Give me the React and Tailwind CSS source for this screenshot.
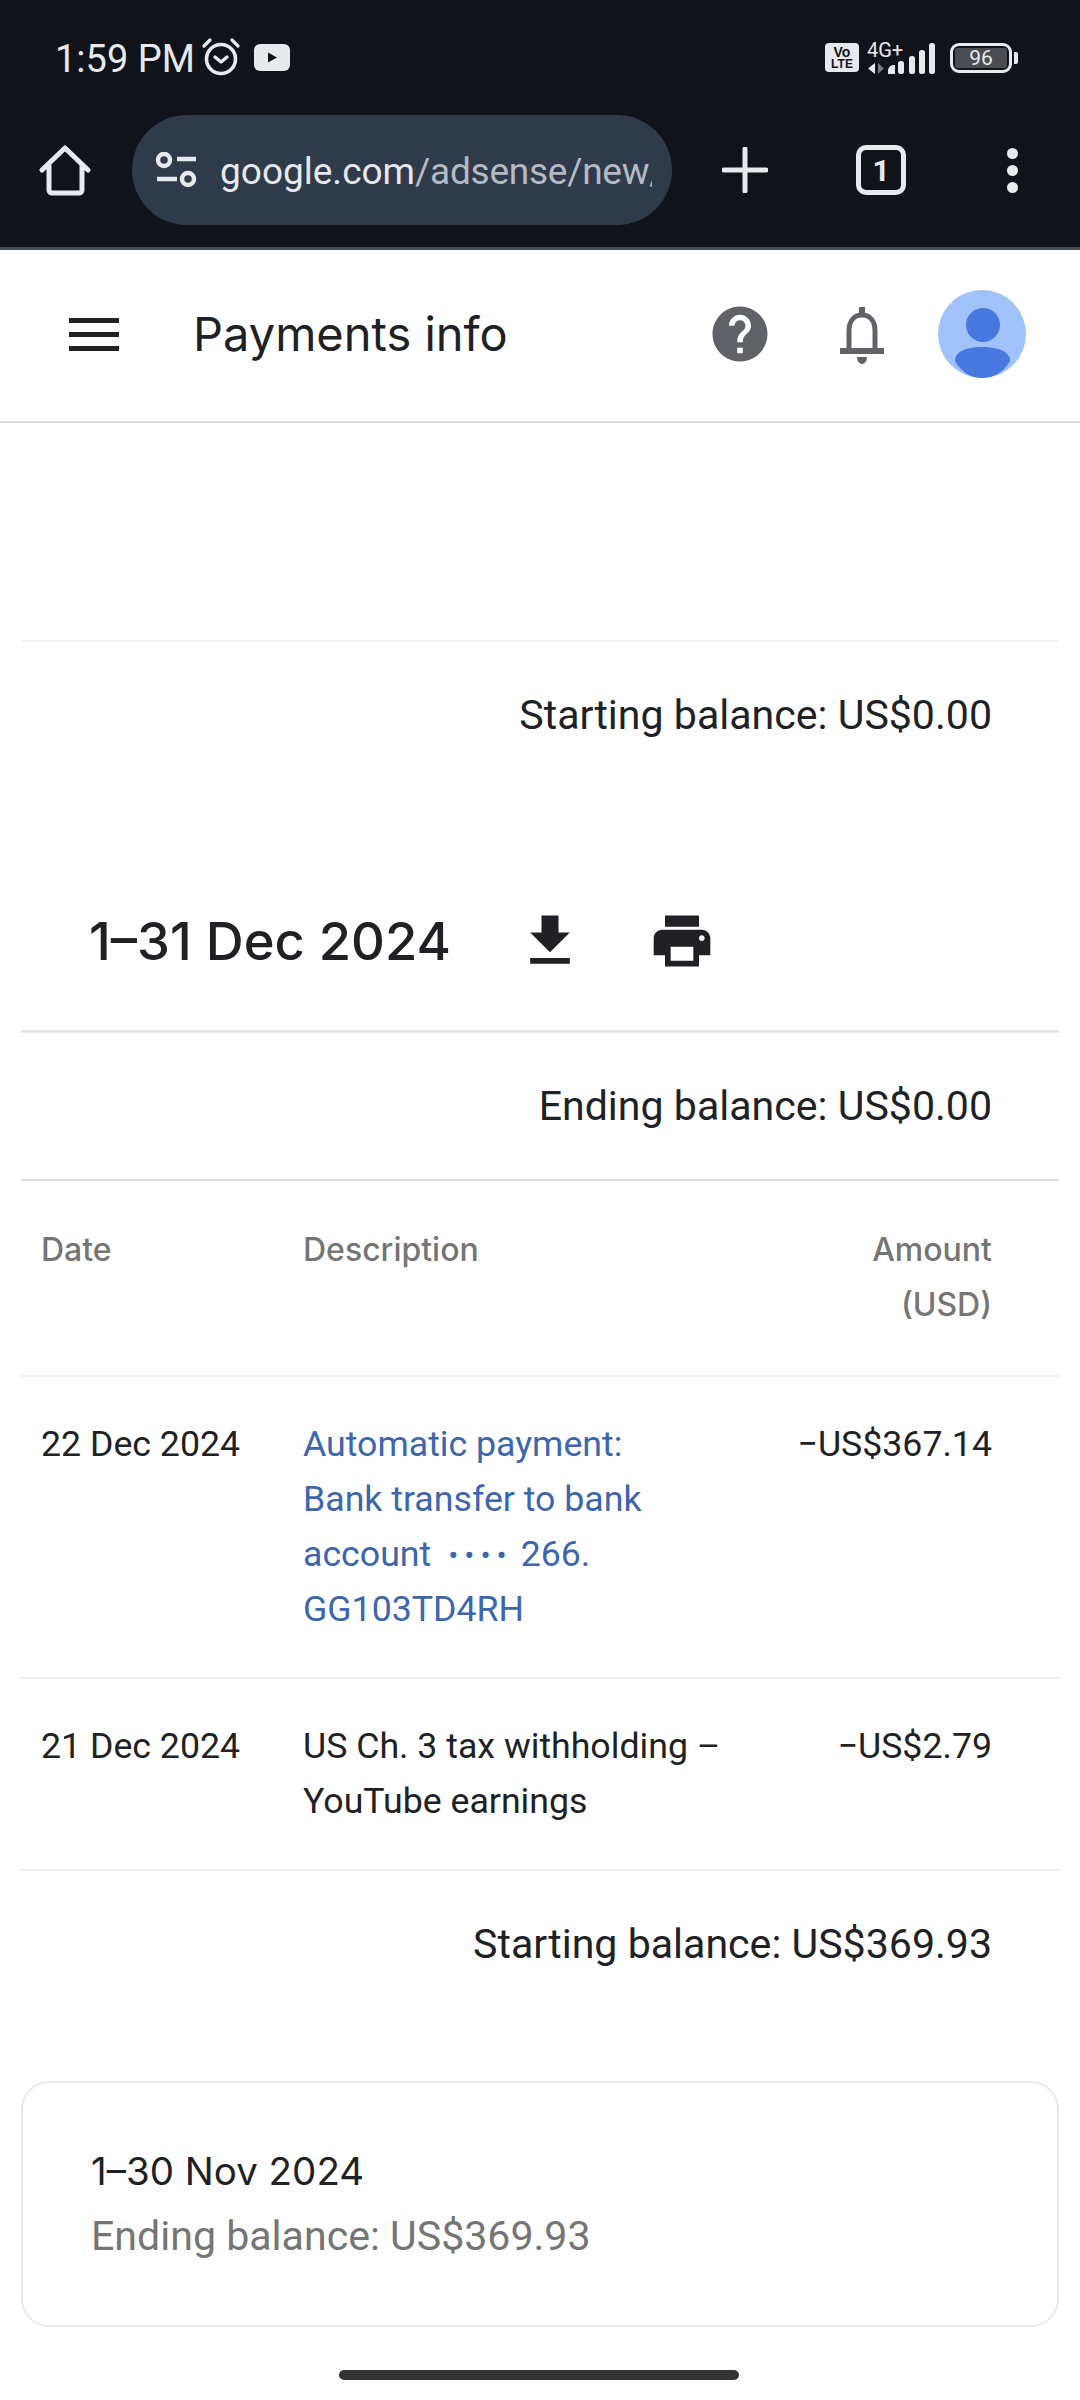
import React from "react";

const roboto = "font-['Roboto',sans-serif]";
const heading = "font-['Inter',sans-serif]";

const AlarmIcon = () => (
  <svg width="40" height="40" viewBox="0 0 40 40" fill="none" stroke="#e8e9ed" strokeLinecap="round">
    <circle cx="20" cy="22" r="14.5" strokeWidth="3.6" />
    <path d="M14 20l6 5 6-5" strokeWidth="3.4" strokeLinejoin="round" />
    <path d="M3 9l6-6M37 9l-6-6" strokeWidth="3.2" />
  </svg>
);

const YoutubeIcon = () => (
  <svg width="36" height="27" viewBox="0 0 36 27">
    <rect width="36" height="27" rx="6" fill="#e8e9ed" />
    <path d="M14 8.5l9 5-9 5z" fill="#10131a" />
  </svg>
);

const SignalIcon = () => (
  <svg width="70" height="32" viewBox="0 0 70 32">
    <path d="M9 20v11l-7-5.5z" fill="#e8e9ed" />
    <path d="M12 20v11l6-5.5z" fill="#77797d" />
    <path d="M22 31v-4a6 6 0 0 1 7-5v9z" fill="#e8e9ed" />
    <rect x="32" y="18" width="6" height="13" rx="2.5" fill="#e8e9ed" />
    <rect x="43" y="13" width="6" height="18" rx="2.5" fill="#e8e9ed" />
    <rect x="53" y="7" width="6" height="24" rx="2.5" fill="#e8e9ed" />
    <rect x="63" y="0" width="6" height="31" rx="2.5" fill="#e8e9ed" />
  </svg>
);

const StatusBar = () => (
  <div className="flex h-[115px] items-start justify-between pl-[55px] pr-[62px] pt-[38px]">
    <div className="flex items-center h-[38px]">
      <span className={`${roboto} text-[38px] leading-[38px] mt-[4px] text-[#e8e9ed] mr-[6px]`}>1:59 PM</span>
      <AlarmIcon />
      <span className="ml-[13px] flex">
        <YoutubeIcon />
      </span>
    </div>
    <div className="flex items-start h-[32px] mt-[5px]">
      <div className="flex h-[29px] w-[34px] flex-col items-center justify-center rounded-[4px] bg-[#e8e9ed] font-['Liberation_Sans',sans-serif] text-[14px] font-bold leading-[12px] text-[#10131a]">
        <span>Vo</span>
        <span className="text-[12px]">LTE</span>
      </div>
      <div className="relative ml-[7px] w-[70px] h-[31px]">
        <span className={`${roboto} absolute left-[1px] top-[-3px] text-[20px] leading-[20px] text-[#e8e9ed]`}>4G+</span>
        <span className="absolute left-0 top-0">
          <SignalIcon />
        </span>
      </div>
      <div className="ml-[14px] flex h-[30px] w-[62px] items-center justify-center rounded-[9px] border-[3px] border-[#e8e9ed] p-[2px]">
        <span className={`${roboto} flex h-full w-full items-center justify-center rounded-[2px] bg-[#4a4c52] text-[21px] leading-none text-[#e8e9ed]`}>96</span>
      </div>
      <div className="ml-[2px] mt-[9px] h-[12px] w-[4px] rounded-r-[2px] bg-[#e8e9ed]" />
    </div>
  </div>
);

const Toolbar = () => (
  <div className="flex h-[132px] items-start">
    <div className="flex h-[110px] w-[132px] shrink-0 items-center pl-[39px]">
      <svg className="mt-[2px]" width="52" height="52" viewBox="0 0 52 52" fill="none" stroke="#e8e9ed" strokeWidth="5" strokeLinejoin="round" strokeLinecap="round">
        <path d="M3 25L26 3l23 22M10 20v25a3 3 0 0 0 3 3h27a3 3 0 0 0 3-3V20" />
      </svg>
    </div>
    <div className="flex h-[110px] w-[540px] shrink-0 items-center rounded-full bg-[#2f3a4a] pl-[23px]">
      <svg width="42" height="36" viewBox="0 0 42 36" fill="none" stroke="#e8e9ed" strokeWidth="4.5">
        <circle cx="9" cy="8" r="6" />
        <path d="M22 7h19M2 27h20" />
        <circle cx="33" cy="27" r="6" />
      </svg>
      <div className={`${roboto} ml-[23px] mt-[3px] w-[432px] overflow-hidden whitespace-nowrap text-[37px] leading-[107px] tracking-[-0.25px] text-[#b5bac4]`}>
        <span className="tracking-normal text-[#e8e9ed]">google.com</span>/adsense/new/
      </div>
    </div>
    <div className="flex h-[110px] flex-1 items-center">
      <svg className="ml-[50px]" width="46" height="46" viewBox="0 0 46 46" stroke="#e8e9ed" strokeWidth="5" strokeLinecap="round">
        <path d="M23 2v42M2 23h42" />
      </svg>
      <div className={`${roboto} ml-[88px] flex h-[50px] w-[50px] items-center justify-center rounded-[10px] border-[5px] border-[#e8e9ed] text-[30px] font-bold text-[#e8e9ed]`}>1</div>
      <div className="ml-[101px] flex flex-col gap-[6px]">
        <div className="h-[11px] w-[11px] rounded-full bg-[#e8e9ed]" />
        <div className="h-[11px] w-[11px] rounded-full bg-[#e8e9ed]" />
        <div className="h-[11px] w-[11px] rounded-full bg-[#e8e9ed]" />
      </div>
    </div>
  </div>
);

const AppHeader = () => (
  <div className="flex h-[173px] items-center border-b-2 border-[#dcdcdc] bg-white pb-[3px]">
    <div className="ml-[69px] flex w-[50px] flex-col gap-[9px]">
      <div className="h-[5px] bg-[#202124]" />
      <div className="h-[5px] bg-[#202124]" />
      <div className="h-[5px] bg-[#202124]" />
    </div>
    <h1 className={`${heading} ml-[74px] text-[47px] font-normal text-[#202124]`}>Payments info</h1>
    <div className="ml-auto flex items-center pr-[54px]">
      <svg width="66" height="66" viewBox="0 0 24 24" fill="#5f6368">
        <path d="M12 2C6.48 2 2 6.48 2 12s4.48 10 10 10 10-4.48 10-10S17.52 2 12 2zm1 17h-2v-2h2v2zm2.07-7.75l-.9.92C13.45 12.9 13 13.5 13 15h-2v-.5c0-1.1.45-2.1 1.17-2.83l1.24-1.26c.37-.36.59-.86.59-1.41 0-1.1-.9-2-2-2s-2 .9-2 2H8c0-2.21 1.79-4 4-4s4 1.79 4 4c0 .88-.36 1.68-.93 2.25z" />
      </svg>
      <svg className="ml-[67px] mt-[3px]" width="44" height="58" viewBox="0 0 44 58" fill="#5f6368">
        <path d="M19 0h6v9h-6z" />
        <path d="M9 44V24C9 14 14 8 22 8s13 6 13 16v20" fill="none" stroke="#5f6368" strokeWidth="5" />
        <path d="M0 41h44v6H0z" />
        <path d="M17 50h10a5 7 0 0 1-10 0z" />
      </svg>
      <svg className="ml-[54px]" width="88" height="88" viewBox="0 0 88 88">
        <circle cx="44" cy="44" r="44" fill="#a1c2fa" />
        <circle cx="45" cy="35" r="17" fill="#4678e0" />
        <path d="M17 71c0-9 10-14 27-14s28 5 28 14c-6 11-17 17-28 17s-21-6-27-17z" fill="#4678e0" />
      </svg>
    </div>
  </div>
);

const BalanceRow = ({ children }) => (
  <div className={`${roboto} flex h-[146px] items-center justify-end pr-[67px] pt-[1px] text-[41.1px] text-[#202124]`}>
    {children}
  </div>
);

const Row = ({ date, amount, children }) => (
  <div className={`${roboto} grid grid-cols-[262px_1fr_auto] border-t-2 border-[#f1f1f1] pb-[40px] pl-[20px] pr-[67px] pt-[40px] text-[35.7px] leading-[55px] text-[#202124]`}>
    <div>{date}</div>
    <div>{children}</div>
    <div>{amount}</div>
  </div>
);

export default function App() {
  return (
    <div className="min-h-[2400px] w-[1080px] overflow-hidden bg-white">
      <div className="h-[250px] border-b-[3px] border-[#464d55] bg-[#10131a]">
        <StatusBar />
        <Toolbar />
      </div>
      <AppHeader />

      <div className="mx-[21px]">
        <div className="h-[219px] border-b-2 border-[#f1f1f1]" />
        <BalanceRow>Starting balance: US$0.00</BalanceRow>
        <div className="flex h-[245px] items-center border-b-[3px] border-[#e6e6e6] pl-[68px] pt-[64px]">
          <h2 className={`${heading} text-[52.5px] font-medium text-[#202124]`}>1–31 Dec 2024</h2>
          <svg className="ml-[65px]" width="68" height="68" viewBox="0 0 24 24" fill="#202124">
            <path d="M19 9h-4V3H9v6H5l7 7 7-7zM5 18v2h14v-2H5z" />
          </svg>
          <svg className="ml-[64px]" width="68" height="68" viewBox="0 0 24 24" fill="#202124">
            <path d="M19 8H5c-1.66 0-3 1.34-3 3v6h4v4h12v-4h4v-6c0-1.66-1.34-3-3-3zm-3 11H8v-5h8v5zm3-7c-.55 0-1-.45-1-1s.45-1 1-1 1 .45 1 1-.45 1-1 1zm-1-9H6v4h12V3z" />
          </svg>
        </div>
        <BalanceRow>Ending balance: US$0.00</BalanceRow>

        <div className={`${heading} grid grid-cols-[262px_1fr_auto] border-t-2 border-[#dcdcdc] pb-[43px] pl-[20px] pr-[67px] pt-[41px] text-[32px] font-medium leading-[55px] text-[#757575]`}>
          <div>Date</div>
          <div>Description</div>
          <div className="text-right">
            Amount
            <br />
            (USD)
          </div>
        </div>

        <Row date="22 Dec 2024" amount="−US$367.14">
          <div className="text-[#3c66ae]">
            Automatic payment:
            <br />
            Bank transfer to bank
            <br />
            account
            <span className="ml-[17px] mr-[8px] text-[30px] leading-[0] tracking-[6px]">••••</span>
            266.
            <br />
            GG103TD4RH
          </div>
        </Row>
        <Row date="21 Dec 2024" amount="−US$2.79">
          US Ch. 3 tax withholding –
          <br />
          YouTube earnings
        </Row>
        <div className="border-t-2 border-[#f1f1f1]">
          <BalanceRow>Starting balance: US$369.93</BalanceRow>
        </div>

        <div className="mt-[64px] flex h-[246px] flex-col justify-center rounded-[28px] border-2 border-[#e8e8e8] pl-[68px]">
          <div className={`${heading} text-[38.5px] leading-[65px] text-[#202124]`}>1–30 Nov 2024</div>
          <div className={`${roboto} text-[41.1px] leading-[65px] text-[#757575]`}>Ending balance: US$369.93</div>
        </div>
      </div>

      <div className="ml-[339px] mt-[43px] h-[10px] w-[400px] rounded-full bg-[#333333]" />
    </div>
  );
}
